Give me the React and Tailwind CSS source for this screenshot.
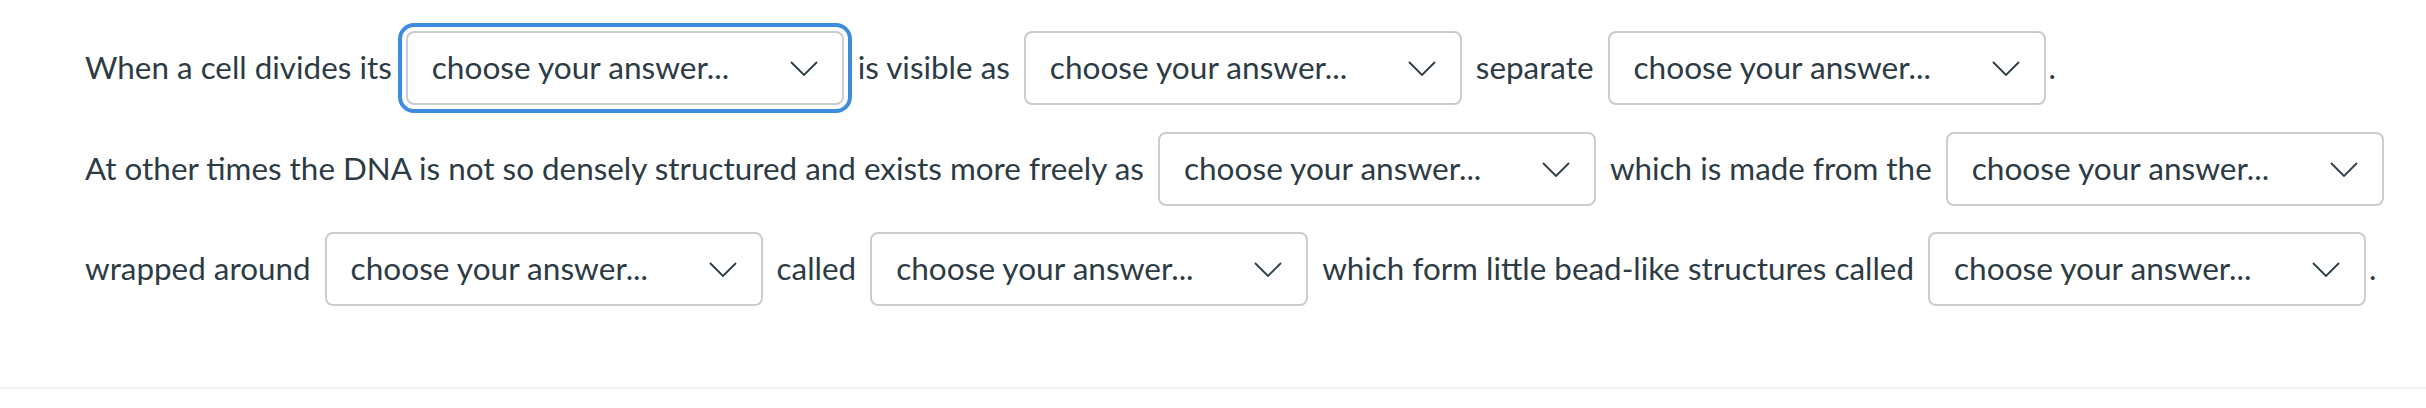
import React from 'react';

const Chevron = () => (
  <svg width="28" height="15" viewBox="0 0 28 15" fill="none" className="shrink-0">
    <polyline points="1,1 14,14 27,1" stroke="#2d3b45" strokeWidth="1.8" fill="none" />
  </svg>
);

const AnswerSelect = ({ focused }) => (
  <button
    type="button"
    className={
      'flex items-center justify-between w-[438px] h-[74px] shrink-0 px-[24px] bg-white border-2 border-[#c7cdd1] rounded-[8px] text-[31.6px] text-[#2d3b45] ' +
      (focused ? 'outline-4 outline-offset-[4px] outline-[#3c8ce0] rounded-[8px]' : '')
    }
  >
    <span>choose your answer...</span>
    <Chevron />
  </button>
);

const Row = ({ children, className }) => (
  <div className={'flex items-center gap-[14px] h-[74px] whitespace-nowrap ' + (className || '')}>
    {children}
  </div>
);

export default function App() {
  return (
    <div
      className="w-[2426px] h-[408px] bg-white text-[#2d3b45] text-[31.4px] flex flex-col"
      style={{ fontFamily: 'Lato, "Open Sans", sans-serif' }}
    >
      <div className="pl-[85px] pt-[31px] h-[387px]">
        {/* Question text with inline blanks */}
        <Row>
          <span>When a cell divides its</span>
          <AnswerSelect focused />
          <span>is visible as</span>
          <AnswerSelect />
          <span>separate</span>
          <AnswerSelect />
          <span className="-ml-[11px]">.</span>
        </Row>
        <Row className="mt-[27px]">
          <span>At other times the DNA is not so densely structured and exists more freely as</span>
          <AnswerSelect />
          <span>which is made from the</span>
          <AnswerSelect />
        </Row>
        <Row className="mt-[26px]">
          <span>wrapped around</span>
          <AnswerSelect />
          <span>called</span>
          <AnswerSelect />
          <span>which form little bead-like structures called</span>
          <AnswerSelect />
          <span className="-ml-[11px]">.</span>
        </Row>
      </div>
      <div className="h-[2px] bg-[#f2f2f2]" />
    </div>
  );
}
